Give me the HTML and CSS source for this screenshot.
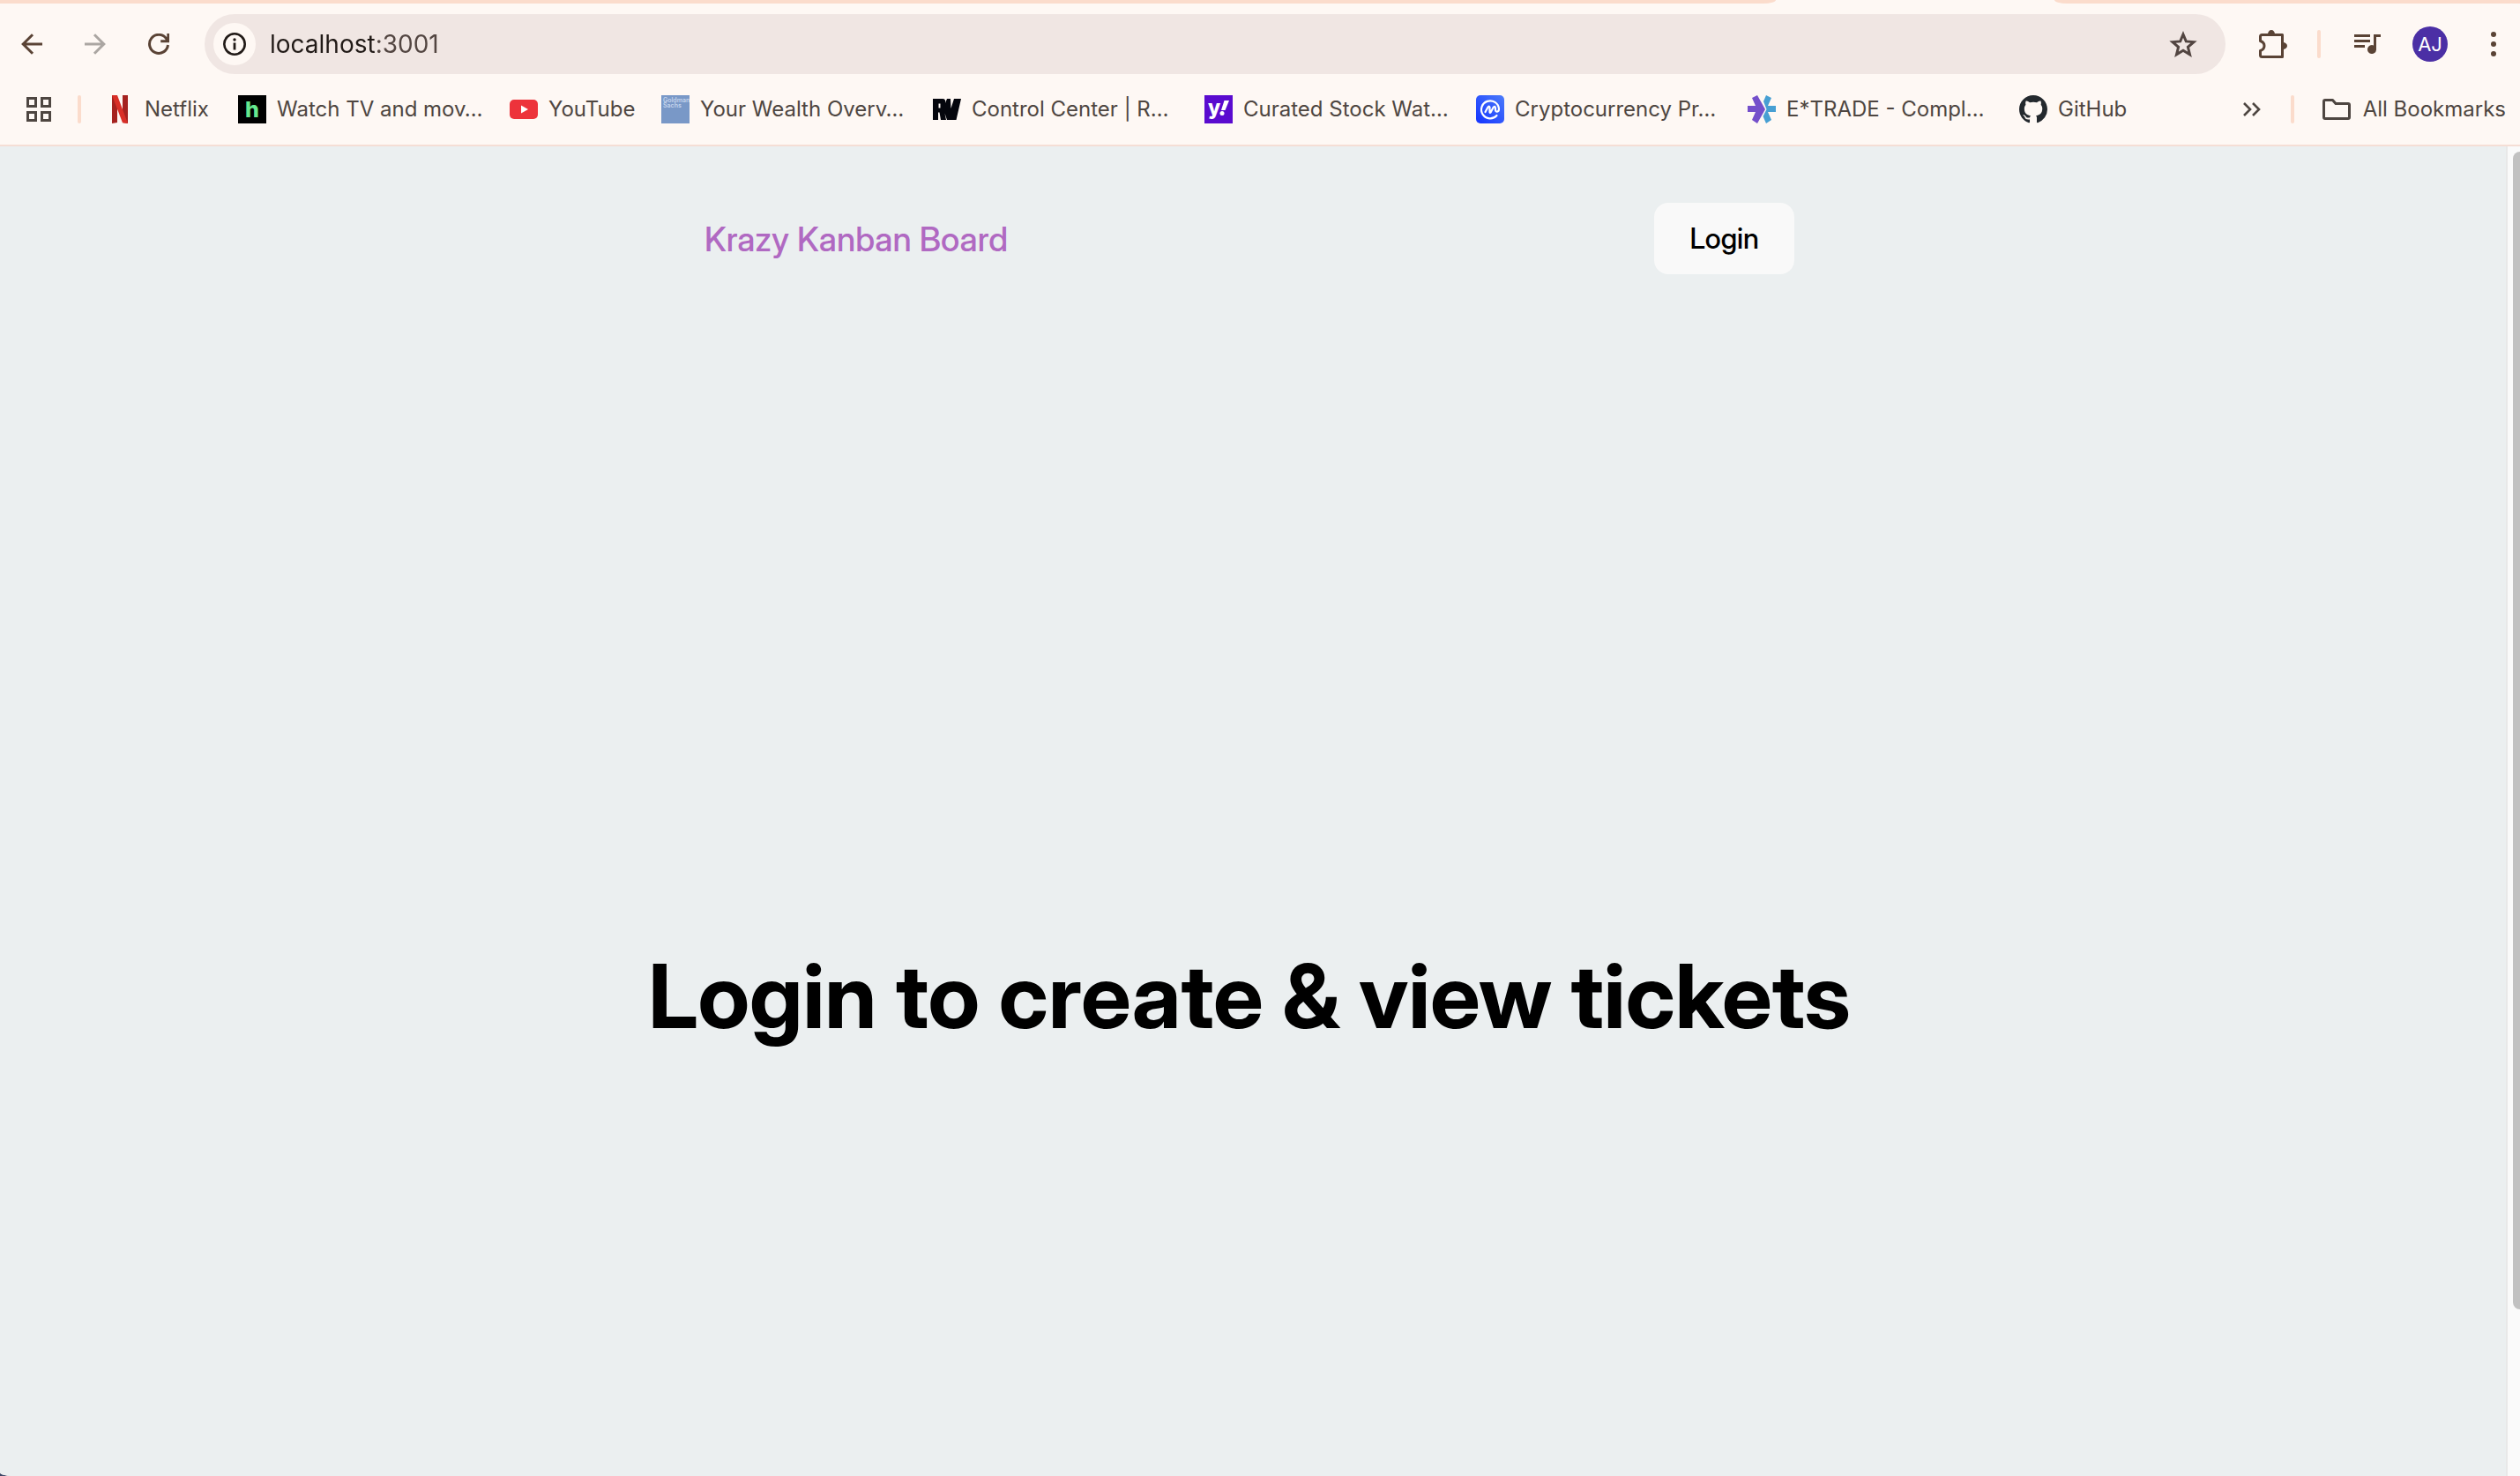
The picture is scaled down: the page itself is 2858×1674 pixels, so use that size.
FILE: index.html
```html
<!DOCTYPE html>
<html lang="en">
<head>
<meta charset="utf-8">
<meta name="viewport" content="width=device-width, initial-scale=1">
<title>Krazy Kanban Board</title>
<link rel="stylesheet" href="styles.css">
</head>
<body>
<div class="window">
  <div class="tab-strip">
    <div class="tab-edge tab-edge-left"></div>
    <div class="tab-edge tab-edge-right"></div>
  </div>
  <div class="chrome">
    <div class="toolbar">
      <div class="nav-buttons">
        <button class="icon-button" type="button" aria-label="Back">
          <svg width="24" height="24" viewBox="0 0 24 24" fill="none" stroke="currentColor" stroke-width="3"><path d="M24 12H2.500M13 1.200L2.200 12L13 22.800"/></svg>
        </button>
        <button class="icon-button muted" type="button" aria-label="Forward">
          <svg width="24" height="24" viewBox="0 0 24 24" fill="none" stroke="currentColor" stroke-width="3"><path d="M0 12H21.500M11 1.200L21.800 12L11 22.800"/></svg>
        </button>
        <button class="icon-button" type="button" aria-label="Reload">
          <svg width="24" height="24" viewBox="0 0 24 24" fill="none" stroke="currentColor" stroke-width="3"><path d="M22.500 13A10.500 10.500 0 1 1 20.500 5.600L22.500 8.500M22.800 0V8.700H14.200"/></svg>
        </button>
      </div>
      <form class="address-bar">
        <button class="site-info" type="button" aria-label="View site information">
          <svg width="26" height="26" viewBox="0 0 26 26" fill="none" stroke="currentColor"><circle cx="13" cy="13" r="11.700" stroke-width="2.600"/><path d="M13 11.500V19.500" stroke-width="2.800"/><circle cx="13" cy="8" r="1.700" fill="currentColor" stroke="none"/></svg>
        </button>
        <input class="address" type="text" aria-label="Address" value="localhost:3001" spellcheck="false">
        <button class="icon-button star" type="button" aria-label="Bookmark this page">
          <svg width="32" height="30" viewBox="0 0 32 30" fill="none" stroke="currentColor" stroke-width="3"><path d="M16 4L19.300 11.900L28 12.600L21.400 18.300L23.500 26.800L16 22.200L8.500 26.800L10.600 18.300L4 12.600L12.700 11.900Z"/></svg>
        </button>
      </form>
      <div class="tools">
        <button class="icon-button" type="button" aria-label="Extensions">
          <svg width="32" height="32" viewBox="0 0 32 32"><path d="M3.500 5.500H26.500V30.500H3.500Q1.500 30.500 1.500 28.500V23.500Q6 22 6 18T1.500 12.500V7.500Q1.500 5.500 3.500 5.500Z" fill="none" stroke="currentColor" stroke-width="3" stroke-linejoin="round"/><path d="M10 5a4 5 0 0 1 8 0zM27 14a5 4 0 0 1 0 8z" fill="currentColor"/></svg>
        </button>
        <span class="divider"></span>
        <button class="icon-button" type="button" aria-label="Media controls">
          <svg width="30" height="22" viewBox="0 0 30 22" fill="currentColor"><path d="M0 0H18V3H0zM0 6H18V9H0zM0 12H12V15H0zM22 0H30V3H25V17.500A5 5 0 1 1 22 12.500z"/></svg>
        </button>
        <button class="avatar" type="button">AJ</button>
        <button class="icon-button" type="button" aria-label="Menu">
          <svg width="6" height="28" viewBox="0 0 6 28" fill="currentColor"><circle cx="3" cy="3" r="3"/><circle cx="3" cy="14" r="3"/><circle cx="3" cy="25" r="3"/></svg>
        </button>
      </div>
    </div>
    <nav class="bookmarks" aria-label="Bookmarks">
      <button class="icon-button apps" type="button" aria-label="Apps">
        <svg width="28" height="28" viewBox="0 0 28 28" fill="none" stroke="currentColor" stroke-width="3"><path d="M1.500 1.500H10.500V10.500H1.500zM17.500 1.500H26.500V10.500H17.500zM1.500 17.500H10.500V26.500H1.500zM17.500 17.500H26.500V26.500H17.500z"/></svg>
      </button>
      <span class="divider"></span>
      <div class="bookmark-list">
        <a class="bookmark bookmark-brief" href="#">
          <svg width="32" height="32" viewBox="0 0 32 32"><path d="M7 0H13V31L7 32zM19 0H25V32L19 31z" fill="#a5221f"/><path d="M7 0H13L25 32L19 31.200z" fill="#d92f27"/></svg>
          <span>Netflix</span>
        </a>
        <a class="bookmark" href="#">
          <svg width="32" height="32" viewBox="0 0 32 32"><path d="M0 0H32V32H0z"/><text class="mark-hulu" x="16" y="25" text-anchor="middle">h</text></svg>
          <span>Watch TV and mov…</span>
        </a>
        <a class="bookmark bookmark-short" href="#">
          <svg width="32" height="32" viewBox="0 0 32 32"><rect y="5" width="32" height="22" rx="5" fill="#ed333b"/><path d="M13 11.500L21 16L13 20.500z" fill="#fff"/></svg>
          <span>YouTube</span>
        </a>
        <a class="bookmark" href="#">
          <svg width="32" height="32" viewBox="0 0 32 32"><path d="M0 0H32V32H0z" fill="#7998c7"/><text class="mark-bank" x="2" y="8">Goldman</text><text class="mark-bank" x="2" y="14">Sachs</text></svg>
          <span>Your Wealth Overv…</span>
        </a>
        <a class="bookmark" href="#">
          <svg width="32" height="32" viewBox="0 0 32 32"><path d="M0 4H11Q15 4 14 9L16 4H20L20.500 15L24 4H32L26.500 28H16L13.500 20.500L15 28H9L7.500 19.500H6V28H0z" fill="#05060d"/><path d="M6.500 9.500H8.500V14.500H6.500z" fill="#fef8f4"/></svg>
          <span>Control Center | R…</span>
        </a>
        <a class="bookmark" href="#">
          <svg width="32" height="32" viewBox="0 0 32 32"><path d="M0 0H32V32H0z" fill="#5a0bcf"/><text class="mark-yahoo" x="4" y="22">y</text><path d="M22.500 6H28L23.500 17H19z" fill="#fff"/><circle cx="20" cy="20.500" r="2.500" fill="#fff"/></svg>
          <span>Curated Stock Wat…</span>
        </a>
        <a class="bookmark" href="#">
          <svg width="32" height="32" viewBox="0 0 32 32"><defs><linearGradient id="coin" x1="0" y1="1" x2="1" y2="0"><stop offset="0" stop-color="#1433ff"/><stop offset="1" stop-color="#4c7cfa"/></linearGradient></defs><rect width="32" height="32" rx="5" fill="url(#coin)"/><path d="M23.500 23A10 10 0 1 1 26 15.500C26 19.500 22 19.500 22 16.500V14.500Q21.500 11.500 19.500 14L16.500 19.500Q15.500 20.500 15.500 18.500V13.500Q14.800 11.500 13.500 13.500L10.500 19" fill="none" stroke="#fff" stroke-width="2.200" stroke-linecap="round"/></svg>
          <span>Cryptocurrency Pr…</span>
        </a>
        <a class="bookmark" href="#">
          <svg width="32" height="32" viewBox="0 0 32 32"><path d="M0 12H9L5 3L11 0L20 16L11 32L5 28L9 19H0z" fill="#744fcb"/><path d="M18 7L21 0L27 3L23 12H32V19H23L27 28L21 32L17.500 24L21.500 16z" fill="#479fd3"/></svg>
          <span>E*TRADE - Compl…</span>
        </a>
        <a class="bookmark bookmark-brief" href="#">
          <svg width="32" height="32" viewBox="0 0 16 16" fill="#24292e"><path d="M8 0C3.580 0 0 3.580 0 8c0 3.540 2.290 6.530 5.470 7.590.4.070.55-.17.55-.38 0-.19-.01-.82-.01-1.490-2.010.37-2.530-.49-2.690-.94-.09-.23-.48-.94-.82-1.130-.28-.15-.68-.52-.01-.53.63-.01 1.080.58 1.230.82.72 1.210 1.870.87 2.330.66.070-.52.28-.87.51-1.070-1.780-.2-3.640-.89-3.640-3.950 0-.87.31-1.590.82-2.150-.08-.2-.36-1.020.08-2.120 0 0 .67-.21 2.200.82.64-.18 1.320-.27 2-.27s1.360.09 2 .27c1.530-1.040 2.200-.82 2.200-.82.44 1.100.16 1.920.08 2.120.51.56.82 1.270.82 2.150 0 3.070-1.870 3.750-3.650 3.950.29.25.54.73.54 1.480 0 1.070-.01 1.930-.01 2.200 0 .21.15.46.55.38A8.010 8.010 0 0 0 16 8c0-4.420-3.580-8-8-8z"/></svg>
          <span>GitHub</span>
        </a>
      </div>
      <button class="icon-button" type="button" aria-label="More bookmarks">
        <svg width="20" height="16" viewBox="0 0 20 16" fill="none" stroke="currentColor" stroke-width="2.600"><path d="M1 1L8 8L1 15M11 1L18 8L11 15"/></svg>
      </button>
      <span class="divider divider-end"></span>
      <a class="all-bookmarks" href="#">
        <svg width="32" height="24" viewBox="0 0 32 24" fill="none" stroke="currentColor" stroke-width="3" stroke-linejoin="round"><path d="M3 1.500H11.500L15 5.500H29Q30.500 5.500 30.500 7V21Q30.500 22.500 29 22.500H3Q1.500 22.500 1.500 21V3Q1.500 1.500 3 1.500Z"/></svg>
        <span>All Bookmarks</span>
      </a>
    </nav>
  </div>
  <div class="viewport">
    <div class="page">
      <header class="site-header">
        <a class="brand" href="#">Krazy Kanban Board</a>
        <button class="login" type="button">Login</button>
      </header>
      <main class="notice">
        <h1>Login to create &amp; view tickets</h1>
      </main>
    </div>
    <div class="scrollbar"><div class="thumb"></div></div>
  </div>
</div>
</body>
</html>
```
FILE: styles.css
```css
* { box-sizing: border-box; }

body {
  margin: 0;
  background: #3d4767;
  font-family: Inter, "Liberation Sans", sans-serif;
  color: #000;
}

button {
  padding: 0;
  border: 0;
  background: none;
  font: inherit;
  font-variation-settings: inherit;
  color: inherit;
}

a { color: inherit; text-decoration: none; }
svg { display: block; flex: none; }

.window {
  display: flex;
  flex-direction: column;
  min-height: 100vh;
  overflow: hidden;
  background: #fef8f4;
  border-bottom-left-radius: 14px 4px;
}

/* Tab strip: only the edges beside the active tab show */
.tab-strip {
  display: flex;
  justify-content: space-between;
  height: 4px;
}
.tab-edge { background: #fbdccc; }
.tab-edge-left { flex: 0 1 2014px; border-bottom-right-radius: 14px 4px; }
.tab-edge-right { flex: 0 1 528px; border-bottom-left-radius: 14px 4px; }

.chrome { border-bottom: 2px solid #f5ded5; }

.toolbar {
  display: flex;
  align-items: center;
  height: 92px;
  padding: 0 27px 0 24px;
  color: #5a4335;
}
.nav-buttons { display: flex; gap: 48px; margin-right: 40px; }
.muted { color: #aba6a2; }

.address-bar {
  display: flex;
  flex: 1;
  align-items: center;
  height: 68px;
  padding: 0 32px 0 10px;
  border-radius: 34px;
  background: #f0e6e3;
}
.site-info {
  display: grid;
  place-items: center;
  width: 48px;
  height: 48px;
  border-radius: 24px;
  background: #fef8f4;
  color: #211a17;
}
.address {
  flex: 1;
  min-width: 0;
  height: 40px;
  margin-left: 16px;
  padding: 0;
  border: 0;
  outline: 0;
  font-family: inherit;
  font-size: 28px;
  /* host in the strong colour, port in the soft one */
  background: linear-gradient(90deg, #211a17 120px, #524541 120px);
  background-clip: text;
  -webkit-background-clip: text;
  color: transparent;
}
.star { color: #524541; }

.tools { display: flex; align-items: center; margin-left: 38px; }
.tools > * { margin-right: 36px; }
.tools > .divider { margin: 0 38px 0 -2px; }
.tools > :last-child { margin: 0 0 0 13px; }

.divider {
  flex: none;
  width: 4px;
  height: 32px;
  border-radius: 2px;
  background: #fbdccc;
}

.avatar {
  width: 40px;
  height: 40px;
  border-radius: 20px;
  background: #4b2fa5;
  color: #fff;
  font-size: 22px;
}

.bookmarks {
  display: flex;
  align-items: center;
  height: 68px;
  padding: 0 16px 12px 30px;
  color: #4e4641;
  font-size: 24px;
  line-height: 32px;
  white-space: nowrap;
}
.apps { margin-right: 30px; }
.bookmark-list { display: flex; flex: 1; gap: 36px; min-width: 0; margin-left: 28px; }
.bookmark { display: flex; align-items: center; gap: 12px; width: 272px; flex: none; }
.bookmark-brief { width: 114px; }
.bookmark-short { width: 136px; }
.divider-end { margin: 0 32px 0 34px; }
.all-bookmarks { display: flex; align-items: center; gap: 14px; }

.mark-hulu { font: 800 25px Inter, sans-serif; fill: #66e88f; }
.mark-bank { font: 600 7px Inter, sans-serif; fill: #c4d4ec; }
.mark-yahoo { font: 800 23px Inter, sans-serif; fill: #fff; }

.viewport { display: flex; flex: 1; background: #ebeff0; }
.page {
  display: flex;
  flex: 1;
  flex-direction: column;
  align-items: center;
  padding: 64px 8px 0 0;
  font-family: "Inter Display", Inter, "Liberation Sans", sans-serif;
  font-variation-settings: "opsz" 32;
}
.site-header {
  display: flex;
  align-items: center;
  justify-content: space-between;
  width: 100%;
  max-width: 1236px;
}
.brand { color: #b069c2; font-size: 38px; font-weight: 500; }
.login {
  height: 81px;
  padding: 0 40px;
  border-radius: 16px;
  background: #f9f9f9;
  font-size: 32px;
  font-weight: 500;
}
.notice { display: flex; flex: 1; align-items: center; padding-top: 272px; }
h1 { margin: 0; font-size: 101px; font-weight: 700; line-height: 112px; }

.scrollbar {
  flex: none;
  width: 16px;
  padding: 6px 0 0 6px;
  border-left: 2px solid #e8e8e8;
  background: #fafafa;
}
.thumb {
  height: 87.4%;
  border-radius: 8px 0 0 8px;
  background: #c1c1c1;
}
```
